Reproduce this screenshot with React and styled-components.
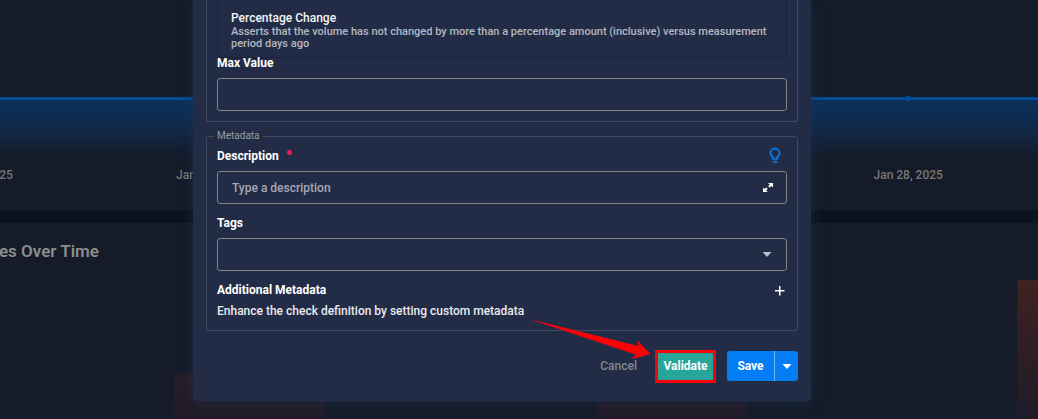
import React from "react";
import styled, { createGlobalStyle } from "styled-components";

const Global = createGlobalStyle`
  *, *::before, *::after { box-sizing: border-box; }
  body {
    margin: 0;
    background: #0d1220;
    color: #fff;
    font: 500 12px/18px Roboto, Inter, sans-serif;
  }
  button, input, select { font: inherit; color: inherit; }
`;

const Page = styled.div`
  position: relative;
  min-height: 100vh;
  overflow: hidden;
  display: flex;
  flex-direction: column;
`;

const Dashboard = styled.main`
  flex: 1;
  display: flex;
  flex-direction: column;
  gap: 13px;
  color: #777878;
`;

const Card = styled.section`
  background: #151b29;
  overflow: hidden;
  ${(p) => p.$grow && "flex: 1; display: flex; flex-direction: column;"}
`;

const AreaChart = styled.svg`
  display: block;
  width: 100%;
  height: 166px;
`;

const Ticks = styled.div`
  display: grid;
  grid-template-columns: repeat(5, 22.4%);
  width: 100%;
  margin-left: -13.3%;
  padding-bottom: 26px;
  text-align: center;
`;

const CardTitle = styled.h2`
  display: flex;
  justify-content: flex-end;
  width: 99px;
  margin: 16px 0 0;
  color: #8c8d8d;
  font-size: 17px;
  line-height: 24px;
  font-weight: 600;
  white-space: nowrap;
`;

const BarChart = styled.svg`
  display: block;
  width: 100%;
  flex: 1;
  min-height: 156px;
`;

const Overlay = styled.div`
  position: absolute;
  inset: 0;
  display: flex;
  justify-content: center;
  align-items: flex-start;
  padding-right: 34px;
`;

const Dialog = styled.form`
  width: 100%;
  max-width: 618px;
  padding: 0 13px 20px;
  background: #232c47;
  border-radius: 0 0 4px 4px;
  box-shadow: 0 2px 14px rgba(32, 62, 104, 0.4);
`;

const Group = styled.fieldset`
  margin: 0;
  min-width: 0;
  padding: ${(p) => (p.$continued ? "0" : "5px")} 10px 10px;
  border: 1px solid #414960;
  border-radius: 3px;
  ${(p) => p.$continued && "border-top: 0; border-radius: 0 0 3px 3px; margin-bottom: 8px;"}
`;

const Legend = styled.legend`
  margin-left: -3px;
  padding: 0 3px;
  color: #969ba8;
  font-size: 10px;
  line-height: 12px;
  font-weight: 400;
`;

const OptionList = styled.div`
  margin-bottom: -4px;
  padding: 10px 13px 7px;
  border: 1px solid #1a213b;
  border-top: 0;
  border-radius: 0 0 3px 3px;
`;

const OptionTitle = styled.div`
  line-height: 16px;
  color: #f4f5f7;
`;

const OptionText = styled.div`
  font-size: 11px;
  line-height: 12px;
  color: #b4b8c2;
`;

const Fields = styled.div`
  display: flex;
  flex-direction: column;
  gap: 10px;
`;

const Field = styled.div`
  display: flex;
  flex-direction: column;
  gap: ${(p) => (p.$tight ? "3px" : "6px")};
`;

const LabelRow = styled.div`
  display: flex;
  justify-content: space-between;
  align-items: center;
  height: 18px;
`;

const Label = styled.label`
  display: flex;
  font-weight: 700;
`;

const Heading = styled.h3`
  margin: 0;
  font-size: 12px;
  font-weight: 700;
`;

const Help = styled.p`
  margin: 0;
  color: #e9eaed;
`;

const Required = styled.span`
  width: 5px;
  height: 5px;
  margin: 3px 0 0 8px;
  border-radius: 50%;
  background: #ec1c5b;
`;

const Control = styled.div`
  display: flex;
  align-items: center;
  height: 33px;
  padding-right: 12px;
  border: 1px solid #83847f;
  border-radius: 3px;
`;

const Input = styled.input`
  flex: 1;
  min-width: 0;
  height: 100%;
  padding: 0 14px;
  border: 0;
  outline: 0;
  background: transparent;
  &::placeholder { color: #a5a9b4; opacity: 1; }
`;

const SelectControl = styled(Control)`
  display: grid;
  padding: 0;
  > * { grid-area: 1 / 1; }
  > svg { justify-self: end; margin-right: 14px; pointer-events: none; }
`;

const Select = styled.select`
  width: 100%;
  height: 100%;
  padding: 0 30px 0 14px;
  border: 0;
  outline: 0;
  appearance: none;
  background: transparent;
`;

const IconButton = styled.button`
  display: flex;
  align-items: center;
  justify-content: center;
  margin: 0;
  padding: 0;
  border: 0;
  background: transparent;
  color: ${(p) => p.$color || "#fff"};
  ${(p) => p.$inset && `margin-right: ${p.$inset}px;`}
`;

const Footer = styled.footer`
  display: flex;
  justify-content: flex-end;
  align-items: center;
  height: 30px;
  margin-top: 20px;
`;

const CancelButton = styled.button`
  padding: 0;
  margin-right: 18px;
  border: 0;
  background: transparent;
  color: #84868d;
`;

const Highlighted = styled.div`
  position: relative;
  margin-right: 11px;
`;

const Arrow = styled.svg`
  position: absolute;
  right: calc(100% + 4px);
  top: -31px;
  pointer-events: none;
`;

const ValidateButton = styled.button`
  display: block;
  width: 61px;
  height: 33px;
  padding: 0;
  border: 3px solid #fb0207;
  background: #27a59a;
  font-weight: 700;
`;

const SplitButton = styled.div`
  display: flex;
  height: 30px;
  border-radius: 3px;
  overflow: hidden;
  background: #027df5;
`;

const SaveButton = styled.button`
  width: 47px;
  padding: 0;
  border: 0;
  background: transparent;
  font-weight: 700;
`;

const SaveMenuButton = styled(IconButton)`
  width: 24px;
  border-left: 1px solid #73b4f6;
`;

const Caret = ({ color = "#fff" }) => (
  <svg width="10" height="5" viewBox="0 0 10 5" aria-hidden="true">
    <path d="M0.5 0h9L5 5z" fill={color} />
  </svg>
);

const dates = ["Jan 24, 2025", "Jan 25, 2025", "Jan 26, 2025", "Jan 27, 2025", "Jan 28, 2025"];
const points = ["20.3%", "42.7%", "65.1%", "87.5%"];
const bars = [
  { x: "16.8%", y: 110 },
  { x: "57.4%", y: 110 },
  { x: "98%", y: 17 },
];

export default function App() {
  return (
    <Page>
      <Global />
      <Dashboard>
        <Card>
          <AreaChart aria-hidden="true">
            <defs>
              <linearGradient id="area" x1="0" y1="0" x2="0" y2="1">
                <stop offset="0" stopColor="#0b315b" />
                <stop offset="0.5" stopColor="#10294a" />
                <stop offset="1" stopColor="#151b29" />
              </linearGradient>
            </defs>
            <rect x="0" y="99" width="100%" height="57" fill="url(#area)" />
            <rect x="0" y="97" width="100%" height="3" fill="#034b92" />
            {points.map((cx) => (
              <circle key={cx} cx={cx} cy="98.5" r="3" fill="#034b92" />
            ))}
          </AreaChart>
          <Ticks>
            {dates.map((d) => (
              <span key={d}>{d}</span>
            ))}
          </Ticks>
        </Card>
        <Card $grow>
          <CardTitle>Anomalies Over Time</CardTitle>
          <BarChart aria-hidden="true">
            <defs>
              <linearGradient id="bar" gradientUnits="userSpaceOnUse" x1="0" y1="17" x2="0" y2="156">
                <stop offset="0" stopColor="#3f2222" />
                <stop offset="0.65" stopColor="#2a1d26" />
                <stop offset="1" stopColor="#1f1b28" />
              </linearGradient>
            </defs>
            {bars.map((b) => (
              <rect
                key={b.x}
                x={b.x}
                y={b.y}
                width="14.6%"
                height="200"
                rx="3"
                fill="url(#bar)"
              />
            ))}
          </BarChart>
        </Card>
      </Dashboard>

      <Overlay>
        <Dialog onSubmit={(e) => e.preventDefault()}>
          <Group $continued>
            <OptionList>
              <OptionTitle>Percentage Change</OptionTitle>
              <OptionText>
                Asserts that the volume has not changed by more than a percentage amount (inclusive)
                versus measurement period days ago
              </OptionText>
            </OptionList>
            <Field>
              <Label htmlFor="max-value">Max Value</Label>
              <Control>
                <Input id="max-value" type="text" />
              </Control>
            </Field>
          </Group>

          <Group>
            <Legend>Metadata</Legend>
            <Fields>
              <Field>
                <LabelRow>
                  <Label htmlFor="description">
                    Description
                    <Required />
                  </Label>
                  <IconButton type="button" aria-label="Suggest" $color="#0877e0" $inset={3}>
                    <svg
                      width="18"
                      height="18"
                      viewBox="0 1 24 24"
                      fill="currentColor"
                      stroke="currentColor"
                      strokeWidth="0.6"
                    >
                      <path d="M12,2A7,7 0 0,1 19,9C19,11.38 17.81,13.47 16,14.74V17A1,1 0 0,1 15,18H9A1,1 0 0,1 8,17V14.74C6.19,13.47 5,11.38 5,9A7,7 0 0,1 12,2M9,21V20H15V21A1,1 0 0,1 14,22H10A1,1 0 0,1 9,21M12,4A5,5 0 0,0 7,9C7,11.05 8.23,12.81 10,13.58V16H14V13.58C15.77,12.81 17,11.05 17,9A5,5 0 0,0 12,4Z" />
                    </svg>
                  </IconButton>
                </LabelRow>
                <Control>
                  <Input id="description" type="text" placeholder="Type a description" />
                  <IconButton type="button" aria-label="Expand">
                    <svg width="12" height="11" viewBox="0 0 12 11" fill="currentColor">
                      <path d="M6 1h5v4.6L9.4 4 7.6 5.6 6.2 4.3 7.8 2.7zM1 5.6l1.6 1.5L4.3 5.5l1.4 1.3L4.1 8.4 5.8 10H1z" />
                    </svg>
                  </IconButton>
                </Control>
              </Field>
              <Field>
                <Label htmlFor="tags">Tags</Label>
                <SelectControl>
                  <Select id="tags" defaultValue="">
                    <option value="" />
                  </Select>
                  <Caret color="#bcc0c8" />
                </SelectControl>
              </Field>
              <Field $tight>
                <LabelRow>
                  <Heading>Additional Metadata</Heading>
                  <IconButton type="button" aria-label="Add metadata" $inset={2}>
                    <svg width="11" height="11" viewBox="0 0 11 11" fill="currentColor">
                      <path d="M5 1h1.5v4H10.5v1.5H6.5v4H5v-4H1V5h4z" />
                    </svg>
                  </IconButton>
                </LabelRow>
                <Help>Enhance the check definition by setting custom metadata</Help>
              </Field>
            </Fields>
          </Group>

          <Footer>
            <CancelButton type="button">Cancel</CancelButton>
            <Highlighted>
              <Arrow width="122" height="42" viewBox="0 0 122 42" aria-hidden="true">
                <path d="M0 0 L109.5 27 L108 21 L121.5 35 L103.5 40 L106.5 35.5 Z" fill="#fb0207" />
              </Arrow>
              <ValidateButton type="button">Validate</ValidateButton>
            </Highlighted>
            <SplitButton>
              <SaveButton type="submit">Save</SaveButton>
              <SaveMenuButton type="button" aria-label="More save options">
                <Caret />
              </SaveMenuButton>
            </SplitButton>
          </Footer>
        </Dialog>
      </Overlay>
    </Page>
  );
}
